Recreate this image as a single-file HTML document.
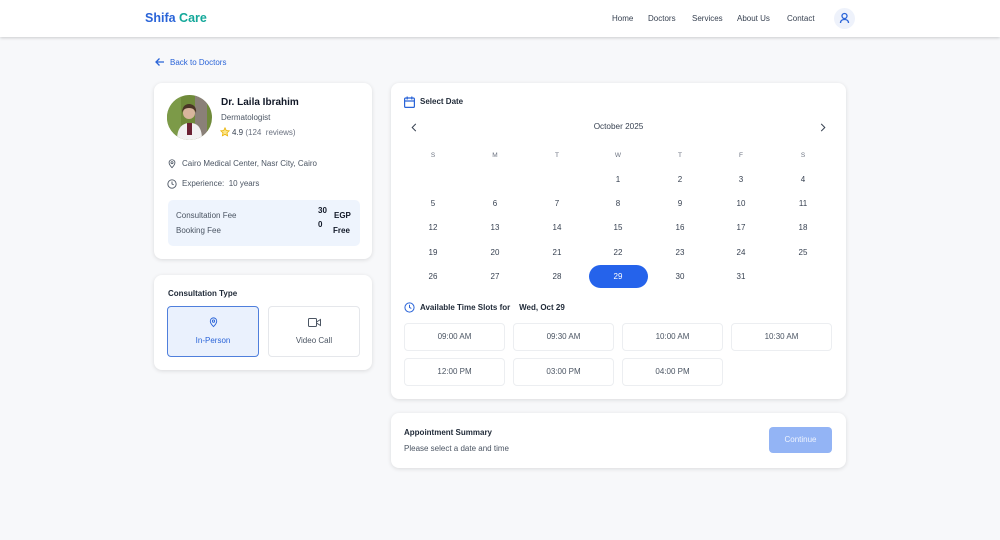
<!DOCTYPE html>
<html><head><meta charset="utf-8"><style>
*{box-sizing:border-box;margin:0;padding:0}
body{width:1000px;height:540px;background:#f7f8fa;font-family:"Liberation Sans",sans-serif;color:#1f2937;position:relative;overflow:hidden}
.a{position:absolute}
.nav{left:0;top:0;width:1000px;height:37px;background:#fff;box-shadow:0 1px 3px rgba(0,0,0,.18)}
.card{background:#fff;border-radius:8px;box-shadow:0 1px 4px rgba(0,0,0,.12)}
.t{font-size:8px;color:#374151}
.cal div{position:absolute;width:40px;margin-left:-20px;text-align:center;font-size:8px;color:#374151}
.slot{position:absolute;width:101px;height:28px;border:1px solid #eceef1;border-radius:4px;font-size:8px;color:#4b5563;text-align:center;line-height:26px;background:#fff}
</style></head><body>
<div class="a nav">
<div class="a" style="left:145px;top:11px;font-size:12.5px;font-weight:bold"><span style="color:#2a64d8">Shifa</span> <span style="color:#14a89a">Care</span></div>
<div class="a t" style="left:612px;top:14px">Home</div>
<div class="a t" style="left:648px;top:14px">Doctors</div>
<div class="a t" style="left:692px;top:14px">Services</div>
<div class="a t" style="left:737px;top:14px">About Us</div>
<div class="a t" style="left:787px;top:14px">Contact</div>
<div class="a" style="left:834px;top:8px;width:21px;height:21px;border-radius:50%;background:#eef2fb"><svg width="21" height="21" viewBox="0 0 21 21" fill="none" stroke="#2a64d8" stroke-width="1.3"><circle cx="10.5" cy="8" r="2.5"/><path d="M6.5 15c0-2.5 2-3.5 4-3.5s4 1 4 3.5"/></svg></div>
</div>
<svg class="a" style="left:154px;top:57px" width="11" height="10" viewBox="0 0 11 10" fill="none" stroke="#2a64d8" stroke-width="1.3"><path d="M10 5H2M5.5 1.5L2 5l3.5 3.5"/></svg>
<div class="a" style="left:170px;top:58px;font-size:8px;color:#2a64d8">Back to Doctors</div>

<div class="a card" style="left:154px;top:83px;width:218px;height:176px">
<svg class="a" style="left:13px;top:12px" width="45" height="45" viewBox="0 0 45 45"><defs><clipPath id="c"><circle cx="22.5" cy="22.5" r="22.5"/></clipPath></defs><g clip-path="url(#c)"><rect width="45" height="45" fill="#6f8a3a"/><rect x="28" y="0" width="12" height="45" fill="#8a8078"/><rect x="0" y="0" width="14" height="45" fill="#7c9a48"/><path d="M10 45c0-12 5-17 13-17s12 5 12 17z" fill="#f2f2f2"/><rect x="20" y="28" width="5" height="12" fill="#6b2233"/><circle cx="22" cy="18" r="6" fill="#d8b59c"/><path d="M15 18c0-6 3-9 7-9s8 3 7 9c-1-3-3-5-7-5s-6 2-7 5z" fill="#4a3526"/></g></svg>
<div class="a" style="left:67px;top:14px;font-size:10px;font-weight:bold;color:#111827">Dr. Laila Ibrahim</div>
<div class="a" style="left:67px;top:30px;font-size:8px;color:#4b5563">Dermatologist</div>
<svg class="a" style="left:66px;top:44px" width="10" height="10" viewBox="0 0 24 24" fill="#fde68a" stroke="#eab308" stroke-width="2"><path d="M12 2l3 6.5 7 .8-5.2 4.8 1.4 7L12 17.6 5.8 21l1.4-7L2 9.3l7-.8z"/></svg>
<div class="a" style="left:78px;top:45px;font-size:8px;color:#6b7280"><b style="color:#374151;font-weight:normal">4.9</b> (124 &nbsp;reviews)</div>
<svg class="a" style="left:13px;top:75px" width="10" height="11" viewBox="0 0 24 24" fill="none" stroke="#4b5563" stroke-width="2"><path d="M12 22s7-7 7-12a7 7 0 0 0-14 0c0 5 7 12 7 12z"/><circle cx="12" cy="10" r="2.5"/></svg>
<div class="a" style="left:28px;top:76px;font-size:8px;color:#4b5563">Cairo Medical Center, Nasr City, Cairo</div>
<svg class="a" style="left:13px;top:96px" width="10" height="10" viewBox="0 0 24 24" fill="none" stroke="#4b5563" stroke-width="2.2"><circle cx="12" cy="12" r="10"/><path d="M12 6v6l4 2"/></svg>
<div class="a" style="left:28px;top:96px;font-size:8px;color:#4b5563">Experience: &nbsp;10 years</div>
<div class="a" style="left:14px;top:117px;width:192px;height:46px;background:#eef4fd;border-radius:5px">
<div class="a" style="left:8px;top:11px;font-size:8px;color:#4b5563">Consultation Fee</div>
<div class="a" style="left:8px;top:26px;font-size:8px;color:#4b5563">Booking Fee</div>
<div class="a" style="left:150px;top:4px;font-size:8px;font-weight:bold;line-height:14px;color:#111827">30<br>0</div>
<div class="a" style="left:166px;top:11px;font-size:8px;font-weight:bold;color:#111827">EGP</div>
<div class="a" style="left:165px;top:26px;font-size:8px;font-weight:bold;color:#111827">Free</div>
</div></div>

<div class="a card" style="left:154px;top:275px;width:218px;height:95px">
<div class="a" style="left:14px;top:14px;font-size:8px;font-weight:bold;color:#1f2937">Consultation Type</div>
<div class="a" style="left:13px;top:31px;width:92px;height:51px;border:1px solid #4f7fdc;background:#eaf1fd;border-radius:4px">
<svg class="a" style="left:40px;top:9px" width="11" height="12" viewBox="0 0 24 24" fill="none" stroke="#2a64d8" stroke-width="2"><path d="M12 22s7-7 7-12a7 7 0 0 0-14 0c0 5 7 12 7 12z"/><circle cx="12" cy="10" r="2.5"/></svg>
<div class="a" style="left:0;width:90px;top:29px;text-align:center;font-size:8px;color:#2a64d8">In-Person</div></div>
<div class="a" style="left:114px;top:31px;width:92px;height:51px;border:1px solid #e5e7eb;border-radius:4px">
<svg class="a" style="left:39px;top:11px" width="13" height="9" viewBox="0 0 13 9" fill="none" stroke="#4b5563" stroke-width="1"><rect x=".5" y=".5" width="8" height="8" rx="1"/><path d="M8.5 4l4-2.5v6L8.5 5"/></svg>
<div class="a" style="left:0;width:90px;top:29px;text-align:center;font-size:8px;color:#4b5563">Video Call</div></div>
</div>

<div class="a card" style="left:391px;top:83px;width:455px;height:316px">
<svg class="a" style="left:13px;top:13px" width="11" height="12" viewBox="0 0 11 12" fill="none" stroke="#2a64d8" stroke-width="1.2"><rect x=".6" y="2" width="9.8" height="9.4" rx="1.2"/><path d="M.6 5h9.8M3.2.5v3M7.8.5v3"/></svg>
<div class="a" style="left:29px;top:14px;font-size:8px;font-weight:bold;color:#1f2937">Select Date</div>
<svg class="a" style="left:19px;top:40px" width="8" height="9" viewBox="0 0 8 10" fill="none" stroke="#374151" stroke-width="1.1"><path d="M6 1L2 5l4 4"/></svg>
<svg class="a" style="left:428px;top:40px" width="8" height="9" viewBox="0 0 8 10" fill="none" stroke="#374151" stroke-width="1.1"><path d="M2 1l4 4-4 4"/></svg>
<div class="a" style="left:0;width:455px;top:39px;text-align:center;font-size:8.2px;color:#374151">October 2025</div>
<div class="a" style="left:198px;top:182px;width:59px;height:23px;background:#2563eb;border-radius:12px"></div>
<div class="cal a" style="left:-391px;top:-83px">
<div style="left:433px;top:152px;font-size:6.5px;color:#6b7280">S</div><div style="left:495px;top:152px;font-size:6.5px;color:#6b7280">M</div><div style="left:557px;top:152px;font-size:6.5px;color:#6b7280">T</div><div style="left:618px;top:152px;font-size:6.5px;color:#6b7280">W</div><div style="left:680px;top:152px;font-size:6.5px;color:#6b7280">T</div><div style="left:741px;top:152px;font-size:6.5px;color:#6b7280">F</div><div style="left:803px;top:152px;font-size:6.5px;color:#6b7280">S</div>
<div style="left:618px;top:175px">1</div><div style="left:680px;top:175px">2</div><div style="left:741px;top:175px">3</div><div style="left:803px;top:175px">4</div>
<div style="left:433px;top:199px">5</div><div style="left:495px;top:199px">6</div><div style="left:557px;top:199px">7</div><div style="left:618px;top:199px">8</div><div style="left:680px;top:199px">9</div><div style="left:741px;top:199px">10</div><div style="left:803px;top:199px">11</div>
<div style="left:433px;top:223px">12</div><div style="left:495px;top:223px">13</div><div style="left:557px;top:223px">14</div><div style="left:618px;top:223px">15</div><div style="left:680px;top:223px">16</div><div style="left:741px;top:223px">17</div><div style="left:803px;top:223px">18</div>
<div style="left:433px;top:248px">19</div><div style="left:495px;top:248px">20</div><div style="left:557px;top:248px">21</div><div style="left:618px;top:248px">22</div><div style="left:680px;top:248px">23</div><div style="left:741px;top:248px">24</div><div style="left:803px;top:248px">25</div>
<div style="left:433px;top:272px">26</div><div style="left:495px;top:272px">27</div><div style="left:557px;top:272px">28</div><div style="left:618px;top:272px;color:#fff">29</div><div style="left:680px;top:272px">30</div><div style="left:741px;top:272px">31</div>
</div>
<svg class="a" style="left:13px;top:219px" width="11" height="11" viewBox="0 0 24 24" fill="none" stroke="#2a64d8" stroke-width="2.2"><circle cx="12" cy="12" r="10"/><path d="M12 6v6l4 2"/></svg>
<div class="a" style="left:29px;top:220px;font-size:8px;font-weight:bold;color:#1f2937">Available Time Slots for &nbsp;&nbsp;&nbsp;Wed, Oct 29</div>
<div class="slot" style="left:13px;top:240px">09:00 AM</div><div class="slot" style="left:122px;top:240px">09:30 AM</div><div class="slot" style="left:231px;top:240px">10:00 AM</div><div class="slot" style="left:340px;top:240px">10:30 AM</div>
<div class="slot" style="left:13px;top:275px">12:00 PM</div><div class="slot" style="left:122px;top:275px">03:00 PM</div><div class="slot" style="left:231px;top:275px">04:00 PM</div>
</div>

<div class="a card" style="left:391px;top:413px;width:455px;height:55px">
<div class="a" style="left:13px;top:15px;font-size:8px;font-weight:bold;color:#1f2937">Appointment Summary</div>
<div class="a" style="left:13px;top:31px;font-size:8px;color:#4b5563">Please select a date and time</div>
<div class="a" style="left:378px;top:14px;width:63px;height:26px;background:#93b4f5;border-radius:4px;color:#eef3fe;font-size:8px;text-align:center;line-height:26px">Continue</div>
</div>
</body></html>
